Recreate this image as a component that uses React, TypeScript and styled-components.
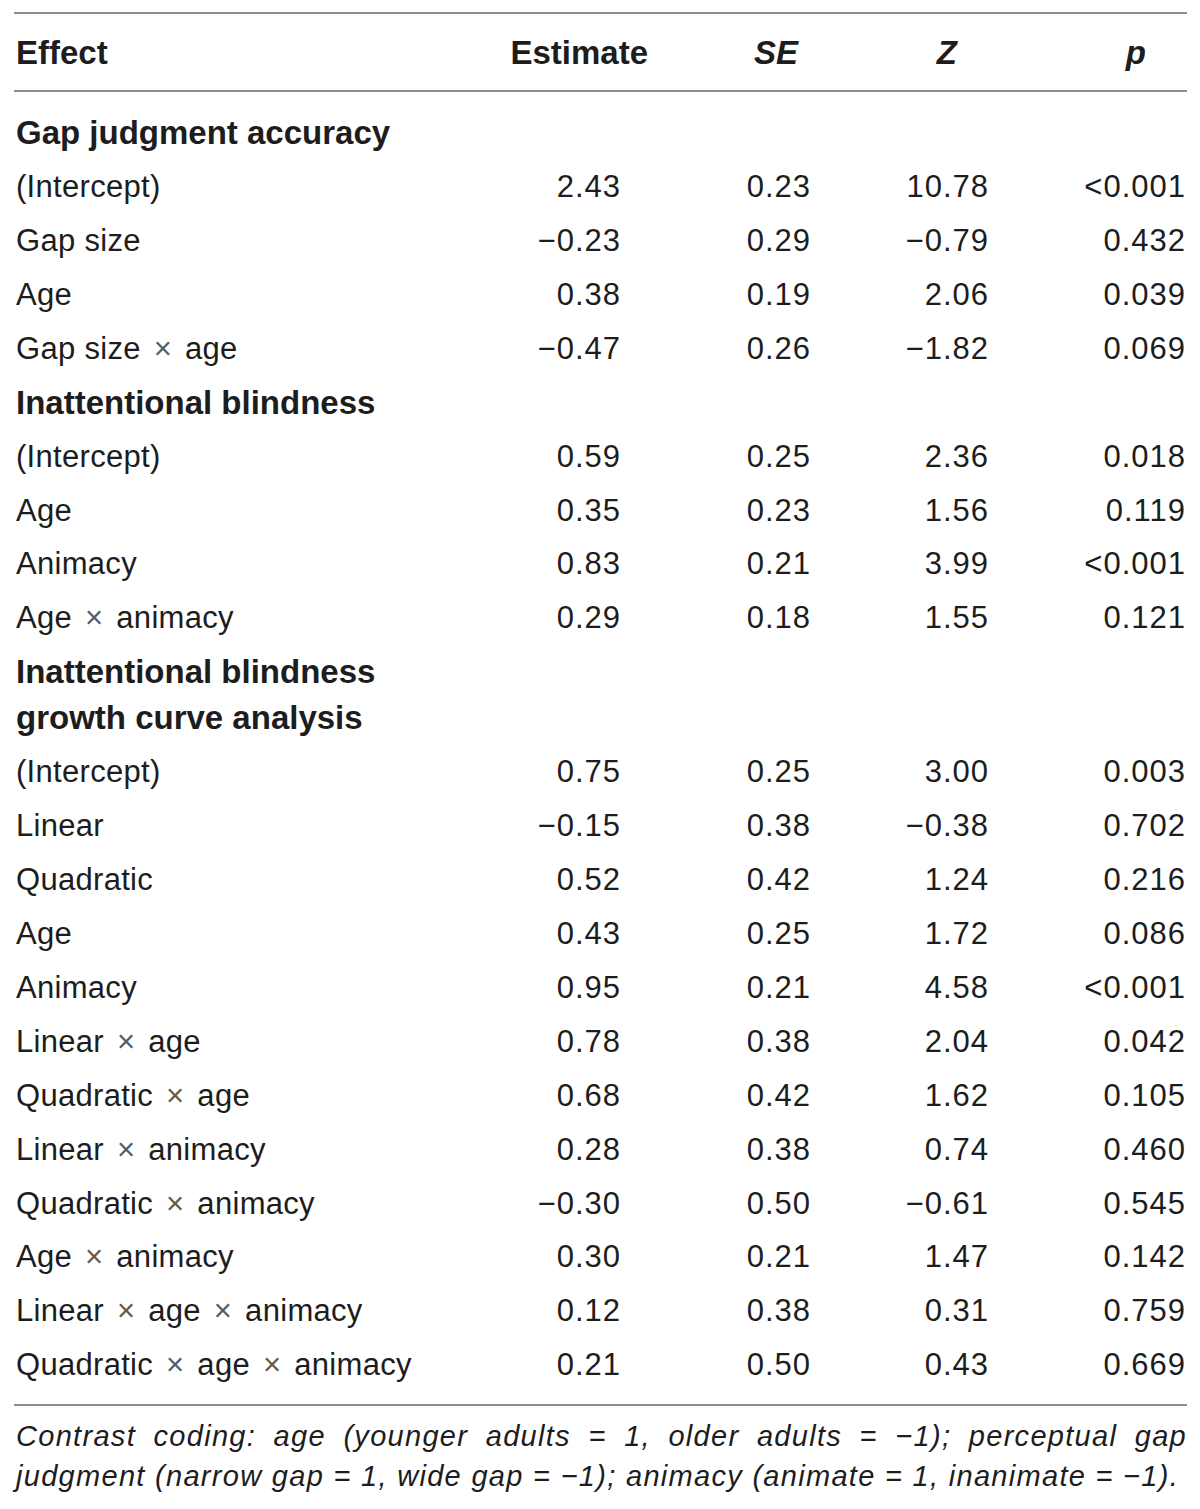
import React from "react";
import styled, { createGlobalStyle } from "styled-components";

const GlobalStyle = createGlobalStyle`
  html, body { margin: 0; padding: 0; background: #ffffff; }
  body {
    font-family: "Liberation Sans", Arial, sans-serif;
    color: #1d1d1d;
  }
`;

const Page = styled.div`
  padding: 12px 13px 0 14px;
  width: 1173px;
`;

const Table = styled.table`
  width: 1173px;
  border-collapse: collapse;
  table-layout: fixed;
  border-top: 2px solid #8e8e8e;
  border-bottom: 2px solid #8e8e8e;
`;

const Col = styled.col<{ $w: number }>`
  width: ${(p) => p.$w}px;
`;

const HeadRow = styled.tr`
  height: 78px;
  border-bottom: 2px solid #8e8e8e;
`;

const HeadCell = styled.th<{ $pad?: number; $italic?: boolean }>`
  font-size: 33px;
  font-weight: 700;
  font-style: ${(p) => (p.$italic ? "italic" : "normal")};
  text-align: ${(p) => (p.$pad === undefined ? "left" : "right")};
  padding: 2px ${(p) => p.$pad ?? 0}px 0 ${(p) => (p.$pad === undefined ? 2 : 0)}px;
  vertical-align: middle;
`;

const Body = styled.tbody`
  tr:first-child > td { padding-top: 18px; }
  tr:last-child > td { padding-bottom: 12px; }
`;

const Row = styled.tr``;

const SectionCell = styled.td`
  font-size: 33px;
  font-weight: 700;
  line-height: 46px;
  padding: 4px 0 4px 2px;
  vertical-align: middle;
`;

const SectionText = styled.div`
  max-width: 440px;
`;

const LabelCell = styled.td`
  font-size: 31px;
  line-height: 53.9px;
  letter-spacing: 0.3px;
  padding: 0 0 0 2px;
  white-space: nowrap;
  vertical-align: middle;
`;

const Times = styled.span`
  color: #5a5a5a;
  margin: 0 4px;
`;

const ValueCell = styled.td<{ $pad: number }>`
  font-size: 31px;
  line-height: 53.9px;
  letter-spacing: 1px;
  text-align: right;
  padding: 0 ${(p) => p.$pad}px 0 0;
  white-space: nowrap;
  vertical-align: middle;
`;

const Note = styled.p`
  margin: 10px 0 0 0;
  font-size: 29px;
  line-height: 40px;
  letter-spacing: 1.3px;
  font-style: italic;
  width: 1171px;
  padding-left: 2px;
`;

const NoteLine = styled.span<{ $justify?: boolean }>`
  display: block;
  text-align: ${(p) => (p.$justify ? "justify" : "left")};
  text-align-last: ${(p) => (p.$justify ? "justify" : "auto")};
  white-space: nowrap;
`;

const valuePads = [47, 75, 17, 1];

type DataRow = { kind: "row"; label: string; v: [string, string, string, string] };
type SectionRow = { kind: "section"; title: string };

const rows: (DataRow | SectionRow)[] = [
  { kind: "section", title: "Gap judgment accuracy" },
  { kind: "row", label: "(Intercept)", v: ["2.43", "0.23", "10.78", "<0.001"] },
  { kind: "row", label: "Gap size", v: ["−0.23", "0.29", "−0.79", "0.432"] },
  { kind: "row", label: "Age", v: ["0.38", "0.19", "2.06", "0.039"] },
  { kind: "row", label: "Gap size × age", v: ["−0.47", "0.26", "−1.82", "0.069"] },
  { kind: "section", title: "Inattentional blindness" },
  { kind: "row", label: "(Intercept)", v: ["0.59", "0.25", "2.36", "0.018"] },
  { kind: "row", label: "Age", v: ["0.35", "0.23", "1.56", "0.119"] },
  { kind: "row", label: "Animacy", v: ["0.83", "0.21", "3.99", "<0.001"] },
  { kind: "row", label: "Age × animacy", v: ["0.29", "0.18", "1.55", "0.121"] },
  { kind: "section", title: "Inattentional blindness growth curve analysis" },
  { kind: "row", label: "(Intercept)", v: ["0.75", "0.25", "3.00", "0.003"] },
  { kind: "row", label: "Linear", v: ["−0.15", "0.38", "−0.38", "0.702"] },
  { kind: "row", label: "Quadratic", v: ["0.52", "0.42", "1.24", "0.216"] },
  { kind: "row", label: "Age", v: ["0.43", "0.25", "1.72", "0.086"] },
  { kind: "row", label: "Animacy", v: ["0.95", "0.21", "4.58", "<0.001"] },
  { kind: "row", label: "Linear × age", v: ["0.78", "0.38", "2.04", "0.042"] },
  { kind: "row", label: "Quadratic × age", v: ["0.68", "0.42", "1.62", "0.105"] },
  { kind: "row", label: "Linear × animacy", v: ["0.28", "0.38", "0.74", "0.460"] },
  { kind: "row", label: "Quadratic × animacy", v: ["−0.30", "0.50", "−0.61", "0.545"] },
  { kind: "row", label: "Age × animacy", v: ["0.30", "0.21", "1.47", "0.142"] },
  { kind: "row", label: "Linear × age × animacy", v: ["0.12", "0.38", "0.31", "0.759"] },
  { kind: "row", label: "Quadratic × age × animacy", v: ["0.21", "0.50", "0.43", "0.669"] },
];

function Label({ text }: { text: string }) {
  const parts = text.split(" × ");
  return (
    <>
      {parts.map((p, i) => (
        <React.Fragment key={i}>
          {i > 0 && (
            <>
              {" "}
              <Times>×</Times>{" "}
            </>
          )}
          {p}
        </React.Fragment>
      ))}
    </>
  );
}

export default function App() {
  return (
    <Page>
      <GlobalStyle />
      <Table>
        <colgroup>
          <Col $w={476} />
          <Col $w={178} />
          <Col $w={218} />
          <Col $w={120} />
          <Col $w={181} />
        </colgroup>
        <thead>
          <HeadRow>
            <HeadCell>Effect</HeadCell>
            <HeadCell $pad={20}>Estimate</HeadCell>
            <HeadCell $pad={88} $italic>SE</HeadCell>
            <HeadCell $pad={49} $italic>Z</HeadCell>
            <HeadCell $pad={41} $italic>p</HeadCell>
          </HeadRow>
        </thead>
        <Body>
          {rows.map((r, i) =>
            r.kind === "section" ? (
              <Row key={i}>
                <SectionCell colSpan={5}>
                  <SectionText>{r.title}</SectionText>
                </SectionCell>
              </Row>
            ) : (
              <Row key={i}>
                <LabelCell>
                  <Label text={r.label} />
                </LabelCell>
                {r.v.map((v, j) => (
                  <ValueCell key={j} $pad={valuePads[j]}>
                    {v}
                  </ValueCell>
                ))}
              </Row>
            )
          )}
        </Body>
      </Table>
      <Note>
        <NoteLine $justify>
          Contrast coding: age (younger adults = 1, older adults = −1); perceptual gap
        </NoteLine>
        <NoteLine>
          judgment (narrow gap = 1, wide gap = −1); animacy (animate = 1, inanimate = −1).
        </NoteLine>
      </Note>
    </Page>
  );
}
